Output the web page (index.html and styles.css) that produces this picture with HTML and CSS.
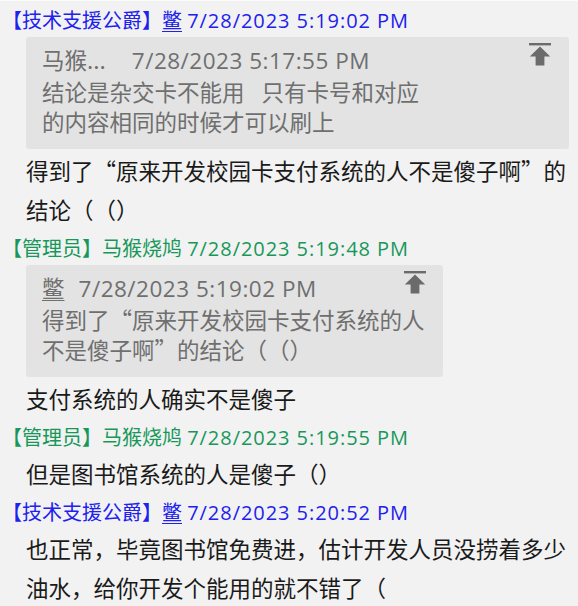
FILE: index.html
```html
<!DOCTYPE html>
<html lang="zh-CN">
<head>
<meta charset="utf-8">
<link rel="stylesheet" href="styles.css">
</head>
<body>
<div class="chat">
  <div class="msg">
    <div class="head blue"><span class="role">【技术支援公爵】</span><span class="name">鳖</span> <span class="time">7/28/2023 5:19:02 PM</span></div>
    <div class="quote q1">
      <div class="qbody">
        <div class="qhead"><span class="qname wide">马猴...</span><span class="qtime">7/28/2023 5:17:55 PM</span></div>
        <div class="qtext">结论是杂交卡不能用<span class="gap"></span>只有卡号和对应<br>的内容相同的时候才可以刷上</div>
      </div>
      <svg class="pin" viewBox="0 0 22 23" width="22" height="23"><rect x="0" y="0" width="22" height="2.4"/><path d="M11 3.6 L21.2 13.6 L15.4 13.6 L15.4 22.5 L6.6 22.5 L6.6 13.6 L0.8 13.6 Z"/></svg>
    </div>
    <div class="text">得到了<span class="fw">“</span>原来开发校园卡支付系统的人不是傻子啊<span class="fw">”</span>的<br>结论（（）</div>
  </div>

  <div class="msg">
    <div class="head green"><span class="role">【管理员】</span><span class="plain">马猴烧鸠</span> <span class="time">7/28/2023 5:19:48 PM</span></div>
    <div class="quote q2">
      <div class="qbody">
        <div class="qhead"><span class="qname link">鳖</span><span class="qtime">7/28/2023 5:19:02 PM</span></div>
        <div class="qtext">得到了<span class="fw">“</span>原来开发校园卡支付系统的人<br>不是傻子啊<span class="fw">”</span>的结论（（）</div>
      </div>
      <svg class="pin" viewBox="0 0 22 23" width="22" height="23"><rect x="0" y="0" width="22" height="2.4"/><path d="M11 3.6 L21.2 13.6 L15.4 13.6 L15.4 22.5 L6.6 22.5 L6.6 13.6 L0.8 13.6 Z"/></svg>
    </div>
    <div class="text">支付系统的人确实不是傻子</div>
  </div>

  <div class="msg">
    <div class="head green"><span class="role">【管理员】</span><span class="plain">马猴烧鸠</span> <span class="time">7/28/2023 5:19:55 PM</span></div>
    <div class="text">但是图书馆系统的人是傻子（）</div>
  </div>

  <div class="msg">
    <div class="head blue"><span class="role">【技术支援公爵】</span><span class="name">鳖</span> <span class="time">7/28/2023 5:20:52 PM</span></div>
    <div class="text">也正常，毕竟图书馆免费进，估计开发人员没捞着多少<br>油水，给你开发个能用的就不错了（</div>
  </div>
</div>
</body>
</html>
```

FILE: styles.css
```css
html, body {
  margin: 0;
  padding: 0;
  background: #f2f2f2;
}
body {
  width: 578px;
  height: 606px;
  overflow: hidden;
  border-top: 1px solid #fbfbfb;
  box-sizing: border-box;
  font-family: "Open Sans", "Noto Sans CJK SC", sans-serif;
  text-spacing-trim: space-all;
}
.chat {
  padding-top: 2px;
  display: flex;
  flex-direction: column;
  gap: 2px;
}
.msg {
  display: flex;
  flex-direction: column;
  align-items: flex-start;
}
.head {
  font-size: 20px;
  line-height: 34px;
  height: 34px;
  padding-left: 2px;
  white-space: nowrap;
}
.head .role, .head .name, .head .plain {
  font-family: "Noto Sans CJK SC", sans-serif;
}
.head .name {
  text-decoration: underline;
  text-underline-offset: 3px;
  text-decoration-thickness: 1px;
}
.head .time {
  letter-spacing: 0.95px;
}
.blue { color: #2121ee; }
.green { color: #17985a; }

.quote {
  margin-left: 26px;
  margin-bottom: 2px;
  background: #e3e3e3;
  border-radius: 3px;
  display: flex;
  align-items: flex-start;
  box-sizing: border-box;
  height: 112px;
  padding: 7px 18px 15px 16px;
  color: #6f6f6f;
}
.q1 { width: 543px; }
.q2 { width: 417px; padding-right: 17px; }
.qbody {
  flex: 1 1 0;
  min-width: 0;
  font-size: 22.5px;
  line-height: 30px;
  white-space: nowrap;
}
.qname {
  font-family: "Noto Sans CJK SC", sans-serif;
}
.qname.wide { margin-right: 26px; }
.qname.link {
  margin-right: 14px;
  text-decoration: underline;
  text-underline-offset: 3px;
  text-decoration-thickness: 1px;
}
.qtime { letter-spacing: 0.5px; }
.qtext {
  font-family: "Noto Sans CJK SC", sans-serif;
}
.gap {
  display: inline-block;
  width: 17px;
}
.pin {
  fill: #6b6b6b;
  margin-top: -1px;
  flex: none;
}
.text {
  font-family: "Noto Sans CJK SC", sans-serif;
  font-size: 22.5px;
  line-height: 39px;
  color: #1a1a1a;
  padding-left: 26px;
  white-space: nowrap;
}
.fw {
  font-family: "Noto Sans CJK SC", sans-serif;
  font-feature-settings: "fwid" 1;
}
```
